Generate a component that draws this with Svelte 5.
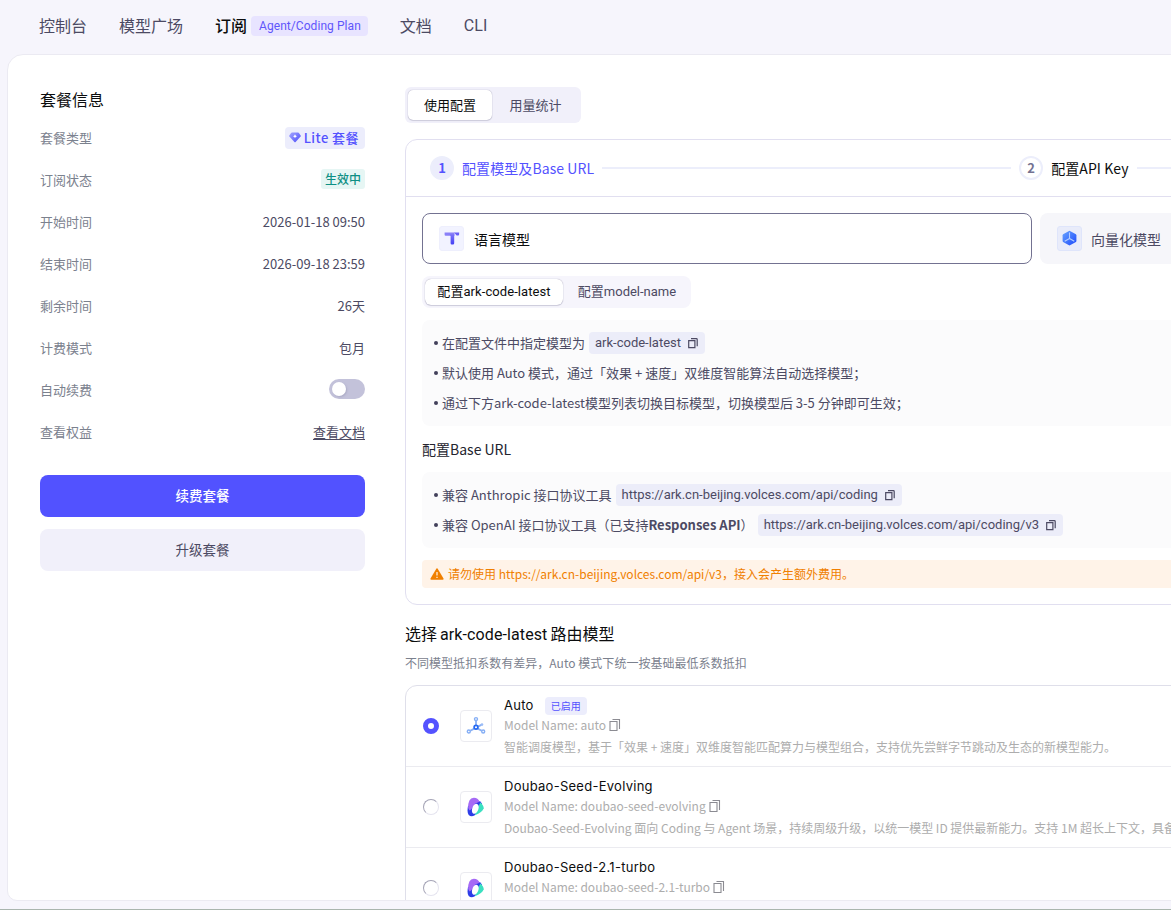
<script>
  const nav = [
    { label: '控制台' },
    { label: '模型广场' },
    { label: '订阅', active: true, tag: 'Agent/Coding Plan' },
    { label: '文档' },
    { label: 'CLI', latin: true },
  ];

  const info = [
    { label: '套餐类型', kind: 'plan', value: 'Lite 套餐' },
    { label: '订阅状态', kind: 'status', value: '生效中' },
    { label: '开始时间', value: '2026-01-18 09:50' },
    { label: '结束时间', value: '2026-09-18 23:59' },
    { label: '剩余时间', value: '26天' },
    { label: '计费模式', value: '包月' },
    { label: '自动续费', kind: 'switch' },
    { label: '查看权益', kind: 'link', value: '查看文档' },
  ];

  const models = [
    {
      title: 'Auto', name: 'auto', icon: 'auto', selected: true,
      desc: '智能调度模型，基于「效果 + 速度」双维度智能匹配算力与模型组合，支持优先尝鲜字节跳动及生态的新模型能力。',
    },
    {
      title: 'Doubao-Seed-Evolving', name: 'doubao-seed-evolving', icon: 'seed',
      desc: 'Doubao-Seed-Evolving 面向 Coding 与 Agent 场景，持续周级升级，以统一模型 ID 提供最新能力。支持 1M 超长上下文，具备',
    },
    { title: 'Doubao-Seed-2.1-turbo', name: 'doubao-seed-2.1-turbo', icon: 'seed' },
  ];
</script>

{#snippet copy()}
  <svg class="copy" width="12" height="12" viewBox="0 0 12 12" fill="none" stroke="currentColor" stroke-width="1.2">
    <path d="M4 1.600h5.400q.8 0 .8.8v6.900" />
    <path d="M1.700 3.700h6.200v7H1.700z" />
  </svg>
{/snippet}

{#snippet copyThin()}
  <svg class="copy" width="12" height="14" viewBox="0 0 12 14" fill="none" stroke="currentColor" stroke-width="1.1">
    <path d="M3.500 1.500h7v9.500" />
    <path d="M1 3.500h7v9H1z" />
  </svg>
{/snippet}

<div class="page">
  <nav>
    {#each nav as item}
      <a class:active={item.active} class:latin={item.latin}>
        <span>{item.label}</span>
        {#if item.tag}<em>{item.tag}</em>{/if}
      </a>
    {/each}
  </nav>

  <main>
    <aside>
      <h2>套餐信息</h2>
      <dl>
        {#each info as row}
          <div class="row">
            <dt>{row.label}</dt>
            <dd>
              {#if row.kind === 'plan'}
                <span class="plan">
                  <svg width="12" height="11" viewBox="0 0 12 11">
                    <defs>
                      <linearGradient id="gem" x1="0" y1="0" x2="1" y2="1">
                        <stop offset="0" stop-color="#a3a5ff" />
                        <stop offset="1" stop-color="#4c4dfb" />
                      </linearGradient>
                    </defs>
                    <path d="M2.8.5h6.4q.4 0 .7.4l1.8 2.5q.3.5-.1 1L6.6 10q-.6.6-1.2 0L.4 4.400q-.4-.5-.1-1L2.100.9q.3-.4.7-.4z" fill="url(#gem)" />
                    <path d="M6 2.200q.3 1.700 2 2-1.700.3-2 2-.3-1.700-2-2 1.700-.3 2-2z" fill="#fff" />
                  </svg>{row.value}
                </span>
              {:else if row.kind === 'status'}
                <span class="status">{row.value}</span>
              {:else if row.kind === 'switch'}
                <span class="switch"><i></i></span>
              {:else if row.kind === 'link'}
                <span class="link">{row.value}</span>
              {:else}
                {row.value}
              {/if}
            </dd>
          </div>
        {/each}
      </dl>
      <button class="primary">续费套餐</button>
      <button class="secondary">升级套餐</button>
    </aside>

    <section class="content">
      <div class="tabs">
        <span class="tab on">使用配置</span>
        <span class="tab">用量统计</span>
      </div>

      <div class="config">
        <header>
          <b class="num on">1</b>
          <span class="step on">配置模型及Base URL</span>
          <i class="rail"></i>
          <b class="num">2</b>
          <span class="step">配置API Key</span>
          <i class="rail"></i>
        </header>

        <div class="body">
          <div class="kinds">
            <div class="kind on">
              <span class="tile">
                <svg width="16" height="16" viewBox="0 0 16 16">
                  <defs>
                    <linearGradient id="tee" x1="0" y1="0" x2="0" y2="1">
                      <stop offset="0" stop-color="#7c74f8" />
                      <stop offset="1" stop-color="#4440f5" />
                    </linearGradient>
                  </defs>
                  <path d="M.6 2.400h9.900v3.300H1.600q-1 0-1-1z" fill="#8a80f8" />
                  <path d="M10 2.400h5.100v2.200q0 1-1 1h-1.500z" fill="#6a60f6" />
                  <path d="M5.600 4.200h4.600v9q0 1.200-1.300 1.200H7.800q-1.200 0-1.200-1.200V6z" fill="url(#tee)" />
                </svg>
              </span>
              <span>语言模型</span>
            </div>
            <div class="kind">
              <span class="tile">
                <svg width="16" height="16" viewBox="0 0 16 16">
                  <defs>
                    <linearGradient id="cube" x1="0" y1="0" x2="1" y2="1">
                      <stop offset="0" stop-color="#69a4ff" />
                      <stop offset="1" stop-color="#1c49fb" />
                    </linearGradient>
                  </defs>
                  <path d="M7.500.8l6.400 3.500q.5.300.5.900v5.800q0 .6-.5.900L7.500 15.400 1.100 11.900Q.6 11.600.6 11V5.200q0-.6.500-.9z" fill="url(#cube)" />
                  <path d="M7.500 2.500v6M7.500 8.500l-4.800 2.700M7.500 8.500l4.800 2.700" stroke="#b5ceff" stroke-width="1.100" fill="none" />
                </svg>
              </span>
              <span>向量化模型</span>
            </div>
          </div>

          <div class="pills">
            <span class="pill on">配置ark-code-latest</span>
            <span class="pill">配置model-name</span>
          </div>

          <ul class="note">
            <li><span>在配置文件中指定模型为</span><code>ark-code-latest{@render copy()}</code></li>
            <li><span>默认使用 Auto 模式，通过「效果 + 速度」双维度智能算法自动选择模型；</span></li>
            <li><span>通过下方ark-code-latest模型列表切换目标模型，切换模型后 3-5 分钟即可生效；</span></li>
          </ul>

          <h4>配置Base URL</h4>

          <ul class="note">
            <li><span>兼容 Anthropic 接口协议工具</span><code>https://ark.cn-beijing.volces.com/api/coding{@render copy()}</code></li>
            <li><span>兼容 OpenAI 接口协议工具（已支持<strong>Responses API</strong>）</span><code>https://ark.cn-beijing.volces.com/api/coding/v3{@render copy()}</code></li>
          </ul>

          <div class="warn">
            <svg width="14" height="12" viewBox="0 0 14 12">
              <path d="M6.300.7q.7-1 1.400 0l5.800 9.900q.4 1.200-.8 1.200H1.300q-1.200 0-.8-1.200z" fill="#f07f00" />
              <path d="M7 4v3.600M7 8.700v1.200" stroke="#fff3e8" stroke-width="1.200" />
            </svg>
            <span>请勿使用 https://ark.cn-beijing.volces.com/api/v3，接入会产生额外费用。</span>
          </div>
        </div>
      </div>

      <h3>选择<span>ark-code-latest</span>路由模型</h3>
      <p class="sub">不同模型抵扣系数有差异，Auto 模式下统一按基础最低系数抵扣</p>

      <div class="models">
        {#each models as m}
          <article>
            <i class="radio" class:on={m.selected}></i>
            <span class="logo">
              {#if m.icon === 'auto'}
                <svg width="20" height="20" viewBox="0 0 20 20" fill="none">
                  <path d="M10 4.500v4.500M8.300 12.600 4.300 14.700M11.700 12.600l4 2.100M12 10.600l3.300-1.700" stroke="#8ab1f4" stroke-width="1.800" />
                  <g stroke="#86aff5" stroke-width="1.400">
                    <circle cx="10" cy="3.100" r="1.500" /><circle cx="2.800" cy="15.500" r="1.500" /><circle cx="17.200" cy="15.500" r="1.500" />
                  </g>
                  <circle cx="16" cy="8.600" r="1.300" fill="#9bbdf7" />
                  <circle cx="10" cy="11.300" r="1.900" stroke="#2468f2" stroke-width="1.700" />
                </svg>
              {:else}
                <svg width="18" height="20" viewBox="0 0 18 20">
                  <path d="M1 9Q-.2 15.500 1.700 17.900 4 20.200 7.800 18.300L12 12 15 6.500Q13.500 4 10.500 3.500z" fill="#2d3de8" />
                  <path d="M1.200 11Q.8 1.200 6.800.8 11 .7 12.600 4.700L8.500 6.500 4.500 12 2.800 13.500Q1.800 12.500 1.200 11z" fill="#a66af5" />
                  <path d="M13.300 5.500Q16.900 8.700 16.700 11.200 15.500 15.200 7.800 18.300L10 12z" fill="#3be0c0" />
                  <ellipse cx="8.300" cy="11.800" rx="3.100" ry="5.200" transform="rotate(20 8.300 11.800)" fill="#fff" />
                </svg>
              {/if}
            </span>
            <div class="text">
              <div class="title"><span>{m.title}</span>{#if m.selected}<em>已启用</em>{/if}</div>
              <div class="name"><span>Model Name: {m.name}</span>{@render copyThin()}</div>
              {#if m.desc}<div class="desc">{m.desc}</div>{/if}
            </div>
          </article>
        {/each}
      </div>
    </section>
  </main>
</div>

<style>
  :global(body) { margin: 0; overflow: hidden; }
  * { box-sizing: border-box; }
  em, i { font-style: normal; }
  ul, dl, dd, h2, h3, h4, p { margin: 0; padding: 0; font-weight: 400; }
  svg { display: block; flex: none; }

  .page {
    width: 1171px; height: 910px; overflow: hidden;
    display: flex; flex-direction: column;
    background: #f6f5fc; border-bottom: 1px solid #a9b5ae;
    font-family: "Noto Sans CJK SC", sans-serif; font-size: 13px; color: #4c4a63;
    white-space: nowrap;
  }
  nav { height: 54px; flex: none; display: flex; align-items: center; gap: 32px; padding: 0 0 4px 39px; font-size: 16px; }
  nav a { display: flex; align-items: center; gap: 4px; line-height: 24px; }
  nav a > span { margin-top: -1px; }
  nav a.active { color: #0c0d0e; font-weight: 500; }
  nav a.latin { font-family: Roboto, sans-serif; }
  nav a.latin > span { margin-top: 2px; }
  nav em {
    height: 20px; margin-top: 1px; padding: 0 7px 0 8px; border-radius: 4px; background: #e8e4ff; color: #5f56fb;
    font: 400 12px/20px Roboto, sans-serif; letter-spacing: .06px;
  }

  main {
    width: 1680px; height: 847px; margin-left: 7px; flex: none; overflow: hidden;
    display: flex; gap: 40px; padding: 32px;
    background: #fff; border: 1px solid #ebeaf2; border-radius: 16px 0 0 10px;
  }
  aside { width: 325px; flex: none; }
  h2 { margin-top: -1px; font-size: 16px; line-height: 26px; color: #0c0d0e; }
  dl { margin: 4px 0 23px; }
  .row { height: 42px; display: flex; align-items: center; justify-content: space-between; }
  dt { color: #7b818e; }
  .plan {
    display: flex; align-items: center; gap: 3px; height: 22px; margin-top: 1px; padding: 0 6px 0 4px;
    border-radius: 4px; background: #ecedfc; color: #5452ff; font-size: 13px; font-weight: 500; letter-spacing: .45px;
  }
  .status { display: block; height: 20px; line-height: 20px; padding: 0 4px; border-radius: 3px; background: #e6f6f4; color: #0e8f84; font-size: 12px; font-weight: 500; }
  .switch { display: block; width: 36px; height: 20px; padding: 3px; border-radius: 10px; background: #c3c2da; }
  .switch i { display: block; width: 14px; height: 14px; border-radius: 50%; background: #fff; box-shadow: 1px 1px 2px #8886a866; }
  .link { text-decoration: underline; text-underline-offset: 2px; }
  button {
    display: block; width: 100%; height: 42px; border: 0; padding: 0 0 2px; border-radius: 8px;
    font: 400 13.500px "Noto Sans CJK SC", sans-serif;
  }
  .primary { background: #5252ff; color: #fff; font-weight: 500; }
  .secondary { margin-top: 12px; background: #f1f0fa; color: #4c4a63; }

  .content { width: 1262px; flex: none; }
  .tabs { display: inline-flex; height: 36px; padding: 3px; border-radius: 6px; background: #f1f0fa; vertical-align: top; }
  .tab { width: 86px; padding-left: 1px; line-height: 30px; text-align: center; border-radius: 5px; }
  .tab.on { width: 84px; padding-left: 0; }
  .tab.on, .pill.on { background: #fff; color: #0c0d0e; box-shadow: 0 0 1px #8f8da8, 0 1px 1px #d3d2e0; }

  .config { margin-top: 16px; height: 466px; border: 1px solid #e1dff0; border-radius: 12px; }
  header { height: 57px; padding: 0 24px; display: flex; align-items: center; border-bottom: 1px solid #e1dff0; }
  .num {
    width: 24px; height: 24px; flex: none; border-radius: 50%; border: 2px solid #eceefb;
    font-size: 13px; line-height: 19px; text-align: center; color: #737291; font-weight: 700;
  }
  .num.on { background: #ecedfc; color: #5452ff; }
  .step { margin: 0 8px; font-size: 14px; line-height: 22px; letter-spacing: .08px; color: #0c0d0e; }
  .step.on { color: #5452ff; }
  .rail { height: 2px; background: #eceefb; flex: 1; }
  .rail:not(:last-child) { flex: 0 0 409px; margin-right: 8px; }

  .body { padding: 16px; }
  .kinds { display: grid; grid-template-columns: 1fr 1fr; gap: 8px; }
  .kind { height: 51px; display: flex; align-items: center; gap: 9px; padding: 0 17px; border-radius: 8px; background: #f6f6fa; font-size: 14px; }
  .kind.on { gap: 10px; padding: 0 16px; background: #fff; border: 1px solid #737291; color: #0c0d0e; }
  .tile { width: 25px; height: 25px; display: flex; padding: 3px 0 0 4px; border-radius: 3px; background: #f2f3ff; border: 1px solid #eeeffd; }
  .kind:not(.on) .tile { background: #e9ecfa; border-color: #dfe5fb; }
  .pills { margin-top: 12px; display: inline-flex; height: 32px; padding: 3px; border-radius: 8px; background: #f6f5fc; vertical-align: top; }
  .pill { width: 125px; padding-left: 3px; line-height: 25px; text-align: center; border-radius: 6px; font-family: Roboto, "Noto Sans CJK SC", sans-serif; }
  .pill.on { width: 138px; padding-left: 0; letter-spacing: .08px; }

  .note { margin-top: 12px; padding: 8px 12px; border-radius: 8px; background: #fbfbfc; list-style: none; }
  .note li { height: 30px; display: flex; align-items: center; }
  .note li > span { margin-top: -2px; }
  .note li::before { content: ""; width: 4px; height: 4px; margin-right: 4px; border-radius: 50%; background: #42405a; }
  .note strong { font-weight: 700; }
  code {
    height: 22px; display: flex; align-items: center; gap: 6px; margin-left: 4px; padding: 0 6px 1px;
    border-radius: 4px; background: #ecedf9; font: 400 13px Roboto, sans-serif;
  }
  h4 { margin-top: 12px; font-size: 14px; line-height: 22px; color: #24242e; }
  .warn {
    margin-top: 12px; height: 28px; display: flex; align-items: center; gap: 4px; padding: 0 8px;
    border-radius: 4px; background: #fff3e8; color: #f07f00; font-size: 12px;
  }
  .warn span { margin-top: -1px; }

  h3 { display: flex; gap: 3px; margin-top: 16px; font-size: 16px; line-height: 24px; color: #0c0d0e; }
  h3 span { margin-top: 2px; font-family: Roboto, sans-serif; letter-spacing: .1px; }
  .sub { margin-top: 6px; font-size: 12px; line-height: 20px; letter-spacing: .03px; color: #7b818e; }

  .models { margin-top: 12px; border: 1px solid #dfdfea; border-radius: 12px; }
  article { height: 81px; display: flex; align-items: center; padding-left: 17px; border-bottom: 1px solid #ebebf0; }
  .radio { width: 16px; height: 16px; flex: none; border-radius: 50%; border: 1px solid; border-color: #a5a4b6 #e5e4ef #e5e4ef #a5a4b6; }
  .radio.on { border: 5px solid #5452ff; }
  .logo { width: 32px; height: 32px; margin: 0 12px 0 21px; flex: none; display: grid; place-items: center; border: 1px solid #ebebf0; border-radius: 4px; }
  .text { height: 62px; }
  .title { height: 21px; display: flex; align-items: center; gap: 10px; font: 400 13px/21px Inter, sans-serif; letter-spacing: .27px; color: #0c0d0e; }
  .title em { height: 18px; margin: 1px 0 0 1px; padding: 0 6px; border-radius: 4px; background: #ecedfc; color: #5452ff; font: 400 10px/17px "Noto Sans CJK SC", sans-serif; letter-spacing: 0; }
  .name { height: 20px; margin-top: -1px; display: flex; align-items: center; gap: 3px; font-size: 12px; line-height: 20px; color: #adadad; }
  .name .copy { color: #8b8b92; }
  .desc { margin-top: 2px; font-size: 12px; line-height: 20px; color: #adadad; }
</style>
